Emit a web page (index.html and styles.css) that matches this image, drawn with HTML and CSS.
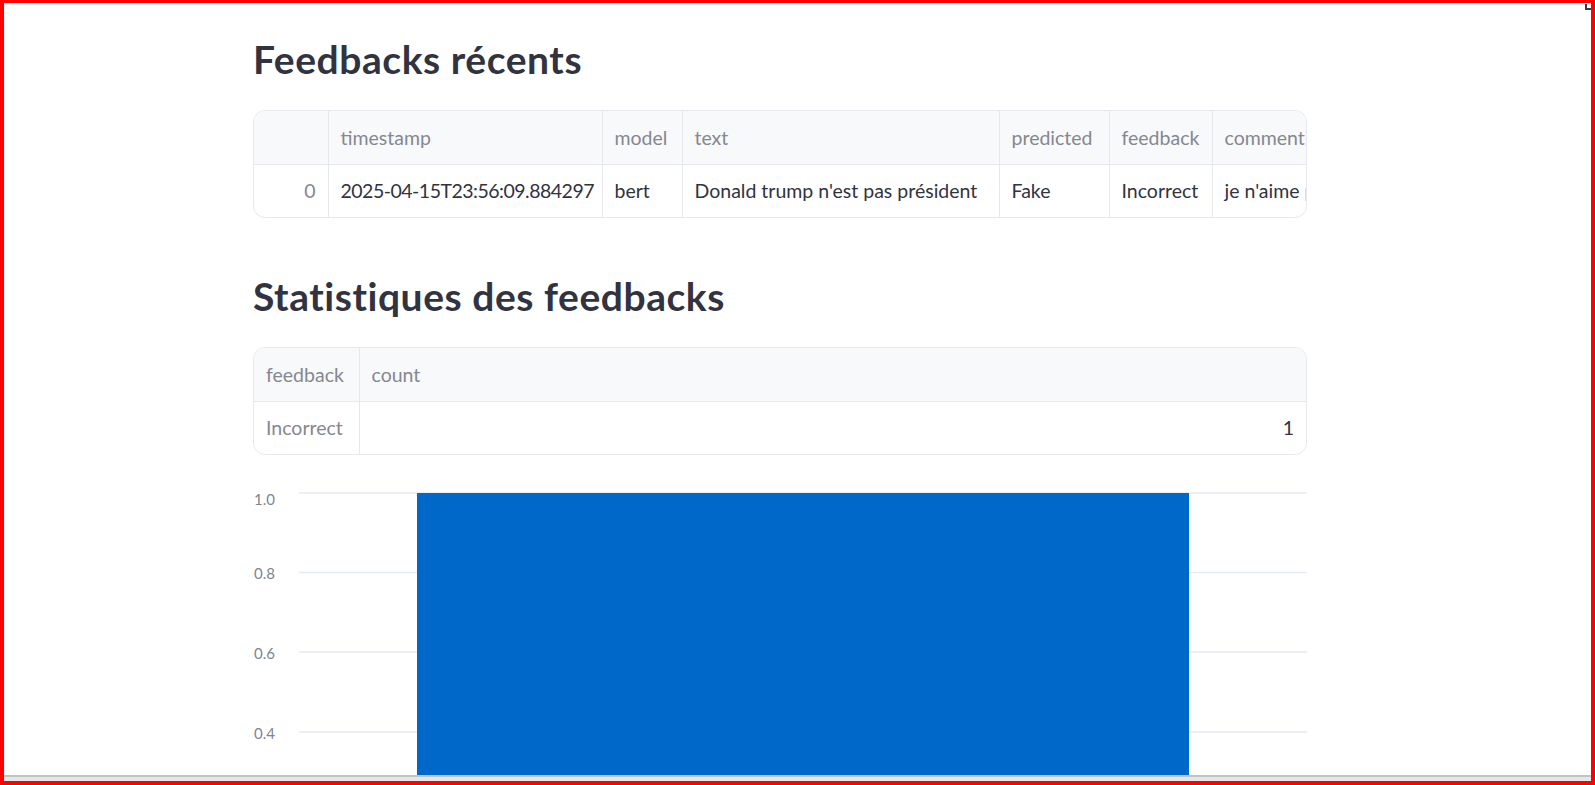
FILE: index.html
```html
<!DOCTYPE html>
<html lang="fr">
<head>
<meta charset="utf-8">
<title>Feedbacks</title>
<link rel="stylesheet" href="styles.css">
</head>
<body>
<div class="frame">
  <span class="corner-mark"></span>
  <div class="viewport">
    <main class="page">
      <h2 class="heading heading-first">Feedbacks récents</h2>
      <div class="grid grid-wide">
        <table class="df df-feedbacks">
          <colgroup>
            <col class="w-idx"><col class="w-ts"><col class="w-model"><col class="w-text"><col class="w-pred"><col class="w-fb"><col class="w-comment">
          </colgroup>
          <thead>
            <tr><th></th><th>timestamp</th><th>model</th><th>text</th><th>predicted</th><th>feedback</th><th>comment</th></tr>
          </thead>
          <tbody>
            <tr><td class="idx">0</td><td class="ts">2025-04-15T23:56:09.884297</td><td>bert</td><td>Donald trump n'est pas président</td><td>Fake</td><td>Incorrect</td><td>je n'aime pas</td></tr>
          </tbody>
        </table>
      </div>

      <h2 class="heading heading-second">Statistiques des feedbacks</h2>
      <div class="grid">
        <table class="df df-stats">
          <colgroup><col class="w-fbidx"><col></colgroup>
          <thead>
            <tr><th>feedback</th><th>count</th></tr>
          </thead>
          <tbody>
            <tr><td class="idx-left">Incorrect</td><td class="num">1</td></tr>
          </tbody>
        </table>
      </div>

      <div class="chart">
        <svg class="chart-svg" width="1054" height="320" viewBox="0 0 1054 320">
          <g class="gridlines">
            <line x1="46" y1="20" x2="1054" y2="20"/>
            <line x1="46" y1="99.5" x2="1054" y2="99.5"/>
            <line x1="46" y1="179" x2="1054" y2="179"/>
            <line x1="46" y1="259" x2="1054" y2="259"/>
          </g>
          <rect class="bar" x="164" y="20" width="772" height="300"/>
          <g class="ylabels">
            <text x="22" y="32">1.0</text>
            <text x="22" y="106">0.8</text>
            <text x="22" y="185.5">0.6</text>
            <text x="22" y="265.5">0.4</text>
          </g>
        </svg>
      </div>
    </main>
  </div>
  <div class="hscroll"></div>
</div>
</body>
</html>
```

FILE: styles.css
```css
html, body {
  margin: 0;
  padding: 0;
  background: #ffffff;
}

body {
  font-family: "Lato", "Source Sans Pro", "Noto Sans", sans-serif;
  color: #31333f;
}

.frame {
  position: relative;
  width: 1595px;
  height: 785px;
  box-sizing: border-box;
  border-style: solid;
  border-color: #ff0000;
  border-width: 3px 4px 4px 4px;
  display: flex;
  flex-direction: column;
  overflow: hidden;
}

.corner-mark {
  position: absolute;
  top: 1px;
  right: 0px;
  width: 4px;
  height: 4px;
  border-left: 2px solid #2d3a5a;
  border-bottom: 2px solid #3b3f48;
}

.viewport {
  flex: 1;
  overflow: hidden;
  background: #ffffff;
}

.hscroll {
  flex: none;
  height: 4px;
  border-top: 2px solid #c3c3c3;
  background: #e6e6e6;
}

.page {
  width: 1054px;
  margin-left: 249px;
}

.heading {
  margin: 0;
  font-size: 39px;
  line-height: 1.2;
  font-weight: 700;
  color: #31333f;
  letter-spacing: 0.55px;
}

.heading-first {
  margin-top: 33px;
}

.heading-second {
  margin-top: 55px;
}

.grid {
  margin-top: 27px;
  border: 1px solid #e6e8ed;
  border-radius: 12px;
  overflow: hidden;
  background: #ffffff;
}

.df {
  border-collapse: collapse;
  table-layout: fixed;
  font-size: 19.5px;
}

.df-feedbacks {
  width: 1078px;
}

.df-stats {
  width: 100%;
}

.w-idx { width: 74px; }
.w-ts { width: 274px; }
.w-model { width: 80px; }
.w-text { width: 317px; }
.w-pred { width: 110px; }
.w-fb { width: 103px; }
.w-comment { width: 120px; }
.w-fbidx { width: 105px; }

.df th,
.df td {
  padding: 0 12px;
  text-align: left;
  white-space: nowrap;
  overflow: hidden;
  border-right: 1px solid #e6e8ed;
}

.df th:last-child,
.df td:last-child {
  border-right: none;
}

.df th {
  height: 53px;
  background: #f8f9fb;
  color: #858791;
  font-weight: 400;
  border-bottom: 1px solid #e6e8ed;
}

.df td {
  height: 52px;
  color: #31333f;
}

.df td.ts {
  letter-spacing: -0.5px;
}

.df td.idx {
  text-align: right;
  color: #858791;
}

.df td.idx-left {
  color: #858791;
}

.df td.num {
  text-align: right;
}

.chart {
  margin-top: 18px;
}

.chart-svg {
  display: block;
}

.gridlines line {
  stroke: #e6eaf1;
  stroke-width: 1.5;
}

.bar {
  fill: #0068c9;
}

.ylabels text {
  font-family: "Lato", "Source Sans Pro", sans-serif;
  font-size: 15px;
  fill: #808495;
  text-anchor: end;
}
```
